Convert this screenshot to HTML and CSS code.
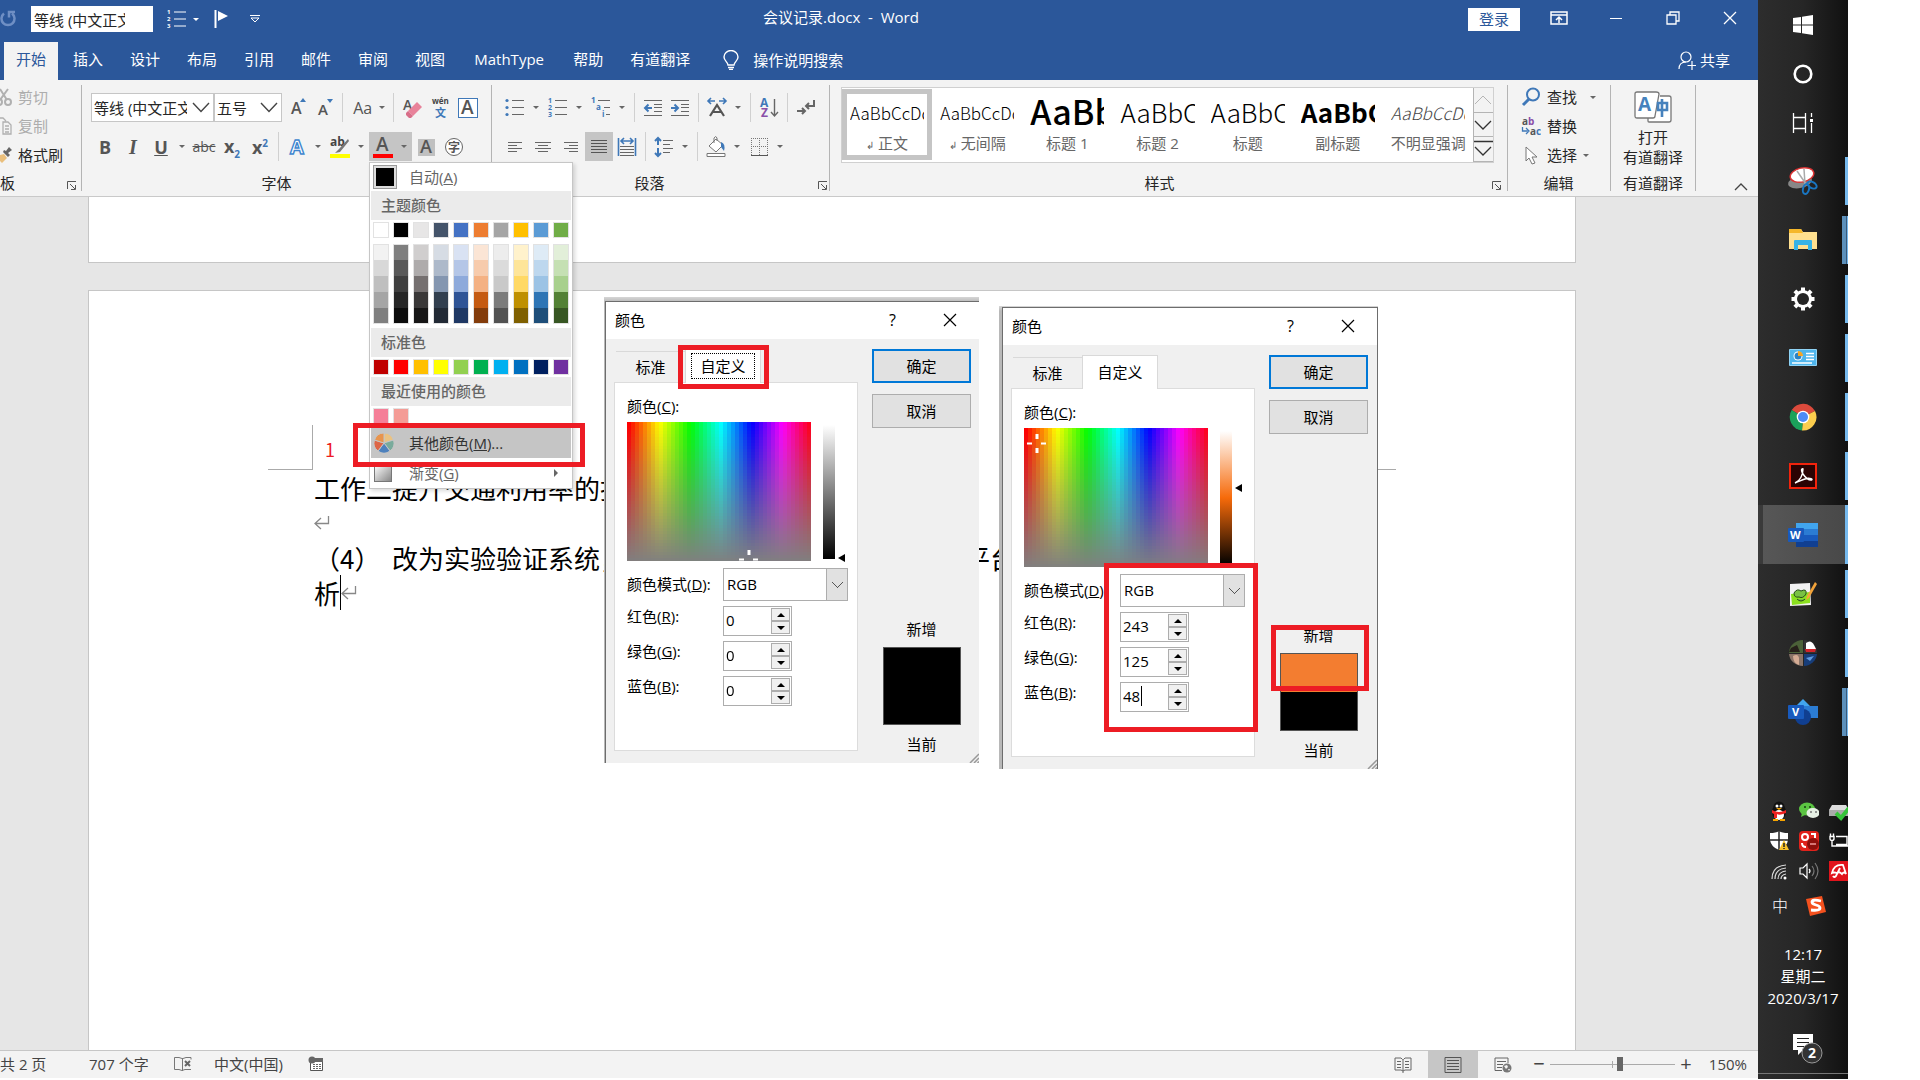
FILE: index.html
```
<!DOCTYPE html>
<html lang="zh-CN">
<head>
    <meta charset="UTF-8">
    <meta name="viewport" content="width=device-width, initial-scale=1.0">
    <title>会议记录.docx - Word</title>
    <link rel="stylesheet" href="styles.css">
</head>
<body>

<main class="word">

    <!-- Title bar -->
    <header class="titlebar">
        <button class="undo" aria-label="重复"><svg width="17" height="18" viewBox="0 0 17 18"><path d="M4 3.500A6.500 6.500 0 1 0 12 3.500M9 7.500V2h6" fill="none" stroke="#6f8fc4" stroke-width="2.500"/></svg></button>
        <input class="quick-font" type="text" aria-label="字体" value="等线 (中文正文)">
        <button class="quick-list" aria-label="编号">
            <svg width="20" height="20" viewBox="0 0 20 20"><path d="M7 3h12M7 10h12M7 17h12" stroke="#fff"/><g fill="#fff" font-family="Open Sans" font-weight="bold" font-size="6"><text x="0" y="5">1</text><text x="0" y="12">2</text><text x="0" y="19">3</text></g></svg>
            <i class="caret light"></i>
        </button>
        <button class="quick-flag" aria-label="标记"><svg width="16" height="20" viewBox="0 0 16 20"><path d="M1.500 1v18" stroke="#fff" stroke-width="2"/><path d="M4 2l10 5-10 5z" fill="#fff"/></svg></button>
        <button class="quick-more" aria-label="自定义"><svg width="10" height="8" viewBox="0 0 10 8"><path d="M0 .5h10M1 3l4 4 4-4z" fill="none" stroke="#fff"/></svg></button>
        <h1 class="doc-title">会议记录.docx&nbsp; -&nbsp; Word</h1>
        <button class="login">登录</button>
        <div class="window-buttons">
            <button aria-label="功能区显示选项"><svg width="18" height="14" viewBox="0 0 18 14"><path d="M1 1h16v12H1zM1 4h16M9 12V6M6 9l3-3 3 3" fill="none" stroke="#fff" stroke-width="1.500"/></svg></button>
            <button aria-label="最小化"><svg width="14" height="14" viewBox="0 0 14 14"><path d="M1 7.500h12" stroke="#fff"/></svg></button>
            <button aria-label="还原"><svg width="14" height="14" viewBox="0 0 14 14"><path d="M1 4h9v9H1zM4 4V1h9v9h-3" fill="none" stroke="#fff" stroke-width="1.300"/></svg></button>
            <button aria-label="关闭"><svg width="14" height="14" viewBox="0 0 14 14"><path d="M1 1l12 12M13 1L1 13" stroke="#fff" stroke-width="1.300"/></svg></button>
        </div>
    </header>

    <!-- Ribbon tabs -->
    <nav class="tabs">
        <button class="tab active">开始</button>
        <button class="tab">插入</button>
        <button class="tab">设计</button>
        <button class="tab">布局</button>
        <button class="tab">引用</button>
        <button class="tab">邮件</button>
        <button class="tab">审阅</button>
        <button class="tab">视图</button>
        <button class="tab addin">MathType</button>
        <button class="tab">帮助</button>
        <button class="tab">有道翻译</button>
        <button class="tell-me"><svg width="16" height="20" viewBox="0 0 16 20"><path d="M5 15c0-3-4-4-4-8a7 6.500 0 0 1 14 0c0 4-4 5-4 8zM5 17.500h6M6 19.500h4" fill="none" stroke="#fff" stroke-width="1.400"/></svg>操作说明搜索</button>
        <button class="share"><svg width="18" height="19" viewBox="0 0 18 19"><g fill="none" stroke="#fff" stroke-width="1.200"><circle cx="8" cy="6" r="5"/><path d="M1 18c0-4 2-7 7-7M14 10v9M9.500 14.500H18"/></g></svg>共享</button>
    </nav>

    <!-- Ribbon -->
    <section class="ribbon">

        <div class="group clipboard">
            <div class="side-list">
                <button class="disabled"><svg width="12" height="20" viewBox="8 0 12 20"><g fill="none" stroke="#b0b0b0" stroke-width="2"><path d="M8 2l7 11M16 2L8 13"/><circle cx="16" cy="15" r="3"/><circle cx="7" cy="15" r="3"/></g></svg>剪切</button>
                <button class="disabled"><svg width="12" height="20" viewBox="8 0 12 20"><path d="M8 2h3l3 3M11 6h5l3 3v9h-8zM13 10h4M13 13h4M13 16h4" fill="none" stroke="#b0b0b0" stroke-width="1.300"/></svg>复制</button>
                <button><svg width="12" height="20" viewBox="8 0 12 20"><path d="M8 10l4-1 3 4-5 5-2-2z" fill="#eabf7c"/><path d="M11 7l5 5 2-2-2-2 4-3-3-3-3 4-2-1z" fill="#666"/></svg>格式刷</button>
            </div>
            <div class="group-name"><span>板</span><button class="launcher" aria-label="剪贴板选项"><svg width="10" height="9" viewBox="0 0 10 9"><path d="M.5 8V.5H9M3 3l5 5M8.500 4v4.500H4" fill="none" stroke="#555"/></svg></button></div>
        </div>

        <div class="group font">
            <div class="tool-row">
                <div class="combo combo-font">
                    <input type="text" aria-label="字体" value="等线 (中文正文)">
                    <button aria-label="选择字体"><svg width="18" height="11" viewBox="0 0 18 11"><path d="M1 1l8 8.500L17 1" fill="none" stroke="#444" stroke-width="1.400"/></svg></button>
                </div>
                <div class="combo combo-size">
                    <input type="text" aria-label="字号" value="五号">
                    <button aria-label="选择字号"><svg width="18" height="11" viewBox="0 0 18 11"><path d="M1 1l8 8.500L17 1" fill="none" stroke="#444" stroke-width="1.400"/></svg></button>
                </div>
                <button class="tool" aria-label="增大字号"><svg width="24" height="24" viewBox="0 0 24 24"><text x="7" y="18" class="glyph" font-size="16">A</text><path d="M16 6l3-4 3 4z" fill="#3f78b8"/></svg></button>
                <button class="tool" aria-label="减小字号"><svg width="24" height="24" viewBox="0 0 24 24"><text x="6" y="19" class="glyph" font-size="15">A</text><path d="M15 3h6l-3 4z" fill="#3f78b8"/></svg></button>
                <i class="sep"></i>
                <button class="tool drop" aria-label="更改大小写"><span class="case">Aa</span><i class="caret"></i></button>
                <i class="sep"></i>
                <button class="tool" aria-label="清除格式"><svg width="24" height="24" viewBox="0 0 24 24"><text x="3" y="14" class="glyph" font-size="14">A</text><path d="M8 15l9-9 5 5-9 9z" fill="#e8829a"/><path d="M6 17l2-2 5 5-2 2H9l-3-3z" fill="#d86d88"/></svg></button>
                <button class="tool" aria-label="拼音指南"><svg width="24" height="24" viewBox="0 0 24 24"><text x="4" y="8" font-family="Open Sans" font-size="8" fill="#444">wén</text><text x="7" y="21" font-family="Noto Sans CJK SC" font-size="11" font-weight="bold" fill="#3f78b8">文</text></svg></button>
                <button class="tool" aria-label="字符边框"><svg width="24" height="24" viewBox="0 0 24 24"><rect x="2.500" y="2.500" width="19" height="19" fill="#fff" stroke="#3f78b8"/><text x="5" y="18" class="glyph" font-size="19">A</text></svg></button>
            </div>
            <div class="tool-row">
                <button class="tool bold" aria-label="加粗">B</button>
                <button class="tool italic" aria-label="倾斜">I</button>
                <button class="tool drop" aria-label="下划线"><span class="under">U</span><i class="caret"></i></button>
                <button class="tool strike" aria-label="删除线">abc</button>
                <button class="tool script" aria-label="下标"><span>x<sub>2</sub></span></button>
                <button class="tool script" aria-label="上标"><span>x<sup>2</sup></span></button>
                <i class="sep"></i>
                <button class="tool drop" aria-label="文本效果"><svg width="24" height="24" viewBox="0 0 24 24"><text x="5" y="19" font-family="Open Sans" font-size="20" font-weight="bold" fill="#fff" stroke="#3f86cf" stroke-width="1.400">A</text></svg><i class="caret"></i></button>
                <button class="tool drop" aria-label="突出显示"><svg width="24" height="24" viewBox="0 0 24 24"><text x="2" y="11" font-family="Open Sans" font-size="12" fill="#444">ab</text><path d="M20 4l1 2-9 11-5 1 4-4z" fill="#777"/><path d="M2 19h20v4H2z" fill="#ff0"/></svg><i class="caret"></i></button>
                <div class="color-picker">
                    <button class="tool drop pressed" aria-label="字体颜色"><svg width="24" height="24" viewBox="0 0 24 24"><text x="5" y="16" class="glyph" font-size="19">A</text><path d="M2 19h20v4H2z" fill="#f00"/></svg><i class="caret"></i></button>

                    <!-- Font colour menu -->
                    <div class="color-menu">
                        <button class="menu-item"><i class="auto-swatch"></i>自动(<u>A</u>)</button>
                        <h2>主题颜色</h2>
                        <div class="swatches" id="theme-colors"></div>
                        <div class="shades" id="theme-shades"></div>
                        <h2>标准色</h2>
                        <div class="swatches" id="standard-colors"></div>
                        <h2>最近使用的颜色</h2>
                        <div class="swatches recent" id="recent-colors"></div>
                        <button class="menu-item hover"><svg width="20" height="20" viewBox="-10 -10 20 20"><g stroke="#c5c5c5"><path d="M0 0V-10A10 10 0 0 1 9.500-3z" fill="#eac282"/><path d="M0 0L9.500-3A10 10 0 0 1 6 8z" fill="#79ab9c"/><path d="M0 0L6 8A10 10 0 0 1-6 8z" fill="#4e81bd"/><path d="M0 0L-6 8A10 10 0 0 1-9.500-3z" fill="#dd6647"/><path d="M0 0L-9.500-3A10 10 0 0 1 0-10z" fill="#e8954e"/></g></svg>其他颜色(<u>M</u>)...</button>
                        <button class="menu-item"><i class="gradient-swatch"></i>渐变(<u>G</u>)<i class="arrow"></i></button>
                    </div>
                    <div class="mark mark-menu"></div>
                </div>
                <button class="tool" aria-label="字符底纹"><svg width="24" height="24" viewBox="0 0 24 24"><path d="M4 4h17v17H4z" fill="#c0c0c0"/><text x="6" y="18" class="glyph" font-size="18">A</text></svg></button>
                <button class="tool" aria-label="带圈字符"><svg width="24" height="24" viewBox="0 0 24 24"><circle cx="12" cy="12" r="8.500" fill="#fff" stroke="#666"/><text x="6" y="17" font-family="Noto Sans CJK SC" font-size="12" fill="#555">字</text></svg></button>
            </div>
            <div class="group-name"><span>字体</span></div>
        </div>

        <div class="group paragraph">
            <div class="tool-row">
                <button class="tool drop" aria-label="项目符号"><svg width="24" height="24" viewBox="0 0 24 24"><path d="M9 4.500h12M9 11.500h12M9 18.500h12" stroke="#666"/><g fill="#3f78b8"><circle cx="4" cy="4.500" r="1.600"/><circle cx="4" cy="11.500" r="1.600"/><circle cx="4" cy="18.500" r="1.600"/></g></svg><i class="caret"></i></button>
                <button class="tool drop" aria-label="编号"><svg width="24" height="24" viewBox="0 0 24 24"><path d="M9 4.500h12M9 11.500h12M9 18.500h12" stroke="#666"/><g fill="#3f78b8" font-family="Open Sans" font-weight="bold" font-size="7"><text x="2" y="7">1</text><text x="2" y="14">2</text><text x="2" y="21">3</text></g></svg><i class="caret"></i></button>
                <button class="tool drop" aria-label="多级列表"><svg width="24" height="24" viewBox="0 0 24 24"><path d="M9 4.500h12M15 11.500h6M17 18.500h4" stroke="#666"/><g fill="#3f78b8" font-family="Open Sans" font-weight="bold" font-size="8"><text x="2" y="7">1</text><text x="7" y="14">a</text><text x="13" y="21">i</text></g></svg><i class="caret"></i></button>
                <i class="sep"></i>
                <button class="tool" aria-label="减少缩进"><svg width="24" height="24" viewBox="0 0 24 24"><path d="M3 4.500h18M3 19.500h18M13 8.500h8M13 11.500h8M13 15.500h8" stroke="#666"/><path d="M11 12H4M7.500 8.500L4 12l3.500 3.500" fill="none" stroke="#3f78b8" stroke-width="2"/></svg></button>
                <button class="tool" aria-label="增加缩进"><svg width="24" height="24" viewBox="0 0 24 24"><path d="M3 4.500h18M3 19.500h18M13 8.500h8M13 11.500h8M13 15.500h8" stroke="#666"/><path d="M3 12h7M6.500 8.500L10 12l-3.500 3.500" fill="none" stroke="#3f78b8" stroke-width="2"/></svg></button>
                <i class="sep"></i>
                <button class="tool drop" aria-label="中文版式"><svg width="24" height="24" viewBox="0 0 24 24"><path d="M5 20l7-11 7 11M8 16h8" fill="none" stroke="#555" stroke-width="2.200"/><path d="M3 5h7M6 2L3 5l3 3M14 5h7M18 2l3 3-3 3" fill="none" stroke="#3f78b8" stroke-width="1.600"/></svg><i class="caret"></i></button>
                <i class="sep"></i>
                <button class="tool" aria-label="排序"><svg width="24" height="24" viewBox="0 0 24 24"><g font-family="Open Sans" font-weight="bold" font-size="12"><text x="3" y="11" fill="#3f78b8">A</text><text x="4" y="21" fill="#8a4fa8">Z</text></g><path d="M17.500 3v17M14 16l3.500 4 3.500-4" fill="none" stroke="#666" stroke-width="1.400"/></svg></button>
                <i class="sep"></i>
                <button class="tool" aria-label="显示编辑标记"><svg width="24" height="24" viewBox="0 0 24 24"><path d="M20 4v6h-8M15 7l-3 3 3 3M3 15h8M8 12l3 3-3 3" fill="none" stroke="#666" stroke-width="2"/></svg></button>
            </div>
            <div class="tool-row">
                <button class="tool" aria-label="左对齐"><svg width="24" height="24" viewBox="0 0 24 24"><path d="M5 7.500h14M5 10.500h9M5 13.500h14M5 16.500h9" stroke="#666"/></svg></button>
                <button class="tool" aria-label="居中"><svg width="24" height="24" viewBox="0 0 24 24"><path d="M4 7.500h16M7 10.500h10M4 13.500h16M7 16.500h10" stroke="#666"/></svg></button>
                <button class="tool" aria-label="右对齐"><svg width="24" height="24" viewBox="0 0 24 24"><path d="M5 7.500h14M10 10.500h9M5 13.500h14M10 16.500h9" stroke="#666"/></svg></button>
                <button class="tool pressed" aria-label="两端对齐"><svg width="24" height="24" viewBox="0 0 24 24"><path d="M4 5.500h16M4 8.500h16M4 11.500h16M4 14.500h16M4 17.500h16" stroke="#555"/></svg></button>
                <button class="tool" aria-label="分散对齐"><svg width="24" height="24" viewBox="0 0 24 24"><path d="M3.500 3v18M20.500 3v18M6 6h12M9 3L6 6l3 3M15 3l3 3-3 3" fill="none" stroke="#3f78b8" stroke-width="1.600"/><path d="M5 11.500h14M5 14.500h14M5 17.500h14M5 20.500h14" stroke="#666"/></svg></button>
                <i class="sep"></i>
                <button class="tool drop" aria-label="行距"><svg width="24" height="24" viewBox="0 0 24 24"><path d="M11 5.500h10M11 9.500h7M11 13.500h10M11 17.500h7" stroke="#666"/><path d="M6 3v7M3 6l3-3 3 3M6 13v8M3 18l3 3 3-3" fill="none" stroke="#3f78b8" stroke-width="2"/></svg><i class="caret"></i></button>
                <i class="sep"></i>
                <button class="tool drop" aria-label="底纹"><svg width="24" height="24" viewBox="0 0 24 24"><path d="M5 11l7-7 7 6-7 7zM10 8V3q2-3 3 0v3M3 18.500h18v3H3z" fill="#fff" stroke="#777"/><path d="M17 7q5 2 3 9l-3-4z" fill="#3f78b8"/></svg><i class="caret"></i></button>
                <button class="tool drop" aria-label="边框"><svg width="24" height="24" viewBox="0 0 24 24"><path d="M4 3.500h17M4.500 3v17M20.500 3v17M12.500 3v17M4 11.500h17" stroke="#777" stroke-dasharray="1 1"/><path d="M4 20.500h17" stroke="#555"/></svg><i class="caret"></i></button>
            </div>
            <div class="group-name"><span>段落</span><button class="launcher" aria-label="段落选项"><svg width="10" height="9" viewBox="0 0 10 9"><path d="M.5 8V.5H9M3 3l5 5M8.500 4v4.500H4" fill="none" stroke="#555"/></svg></button></div>
        </div>

        <div class="group styles">
            <div class="gallery">
                <button class="style selected"><span class="preview">AaBbCcDd</span><span class="style-name"><small>↲</small> 正文</span></button>
                <button class="style"><span class="preview">AaBbCcDd</span><span class="style-name"><small>↲</small> 无间隔</span></button>
                <button class="style"><span class="preview huge">AaBbC</span><span class="style-name">标题 1</span></button>
                <button class="style"><span class="preview large">AaBbCc</span><span class="style-name">标题 2</span></button>
                <button class="style"><span class="preview large">AaBbCc</span><span class="style-name">标题</span></button>
                <button class="style"><span class="preview large strong">AaBbCc</span><span class="style-name">副标题</span></button>
                <button class="style"><span class="preview slanted">AaBbCcDd</span><span class="style-name">不明显强调</span></button>
                <div class="gallery-scroll">
                    <button aria-label="上一行"><svg width="18" height="10" viewBox="0 0 18 10"><path d="M1 9l8-8 8 8" fill="none" stroke="#b5b5b5"/></svg></button>
                    <button aria-label="下一行"><svg width="18" height="10" viewBox="0 0 18 10"><path d="M1 1l8 8 8-8" fill="none" stroke="#333" stroke-width="1.300"/></svg></button>
                    <button aria-label="更多样式"><svg width="20" height="18" viewBox="0 0 20 18"><path d="M0 1.500h20M2 7l8 8 8-8" fill="none" stroke="#333" stroke-width="1.300"/></svg></button>
                </div>
            </div>
            <div class="group-name"><span>样式</span><button class="launcher" aria-label="样式选项"><svg width="10" height="9" viewBox="0 0 10 9"><path d="M.5 8V.5H9M3 3l5 5M8.500 4v4.500H4" fill="none" stroke="#555"/></svg></button></div>
        </div>

        <div class="group editing">
            <div class="side-list">
                <button><svg width="20" height="20" viewBox="0 0 20 20"><circle cx="12" cy="7.500" r="6" fill="none" stroke="#3f78b8" stroke-width="2"/><path d="M8 12l-6 6" stroke="#3f78b8" stroke-width="3"/></svg>查找<i class="caret far"></i></button>
                <button><svg width="20" height="20" viewBox="0 0 20 20"><g font-family="Open Sans" font-size="10" font-weight="bold"><text x="1" y="9" fill="#555">a</text><text x="7" y="9" fill="#8a4fa8">b</text><text x="9" y="19" fill="#555">a</text><text x="15" y="19" fill="#3f78b8">c</text></g><path d="M1.500 11v4h5M5 12l3 3-3 3" fill="none" stroke="#3f78b8" stroke-width="1.300"/></svg>替换</button>
                <button><svg width="20" height="20" viewBox="0 0 20 20"><path d="M5 2v14l3-3 3 6 3-1-3-6h5z" fill="#fff" stroke="#777"/></svg>选择<i class="caret"></i></button>
            </div>
            <div class="group-name"><span>编辑</span></div>
        </div>

        <div class="group youdao">
            <button class="big-button">
                <svg width="38" height="32" viewBox="0 0 38 32"><path d="M14 27v3q0 1 1 1h20q2 0 2-2V7q0-2-2-2h-9" fill="#fff" stroke="#777" stroke-width="1.300"/><path d="M3 1h19q3 0 3 2l-4 22q0 2-2 2H3q-2 0-2-2V3q0-2 2-2z" fill="#fff" stroke="#777" stroke-width="1.300"/><text x="4" y="20" font-family="Open Sans" font-size="19" font-weight="bold" fill="#4682bd">A</text><path d="M24 12h9v7h-9zM28 8v18" fill="none" stroke="#4682bd" stroke-width="2.600"/></svg>
                <span>打开</span>
                <span>有道翻译</span>
            </button>
            <div class="group-name"><span>有道翻译</span></div>
        </div>

        <button class="collapse" aria-label="折叠功能区"><svg width="14" height="9" viewBox="0 0 14 9"><path d="M1 8l6-6 6 6" fill="none" stroke="#444" stroke-width="1.300"/></svg></button>
    </section>

    <!-- Document -->
    <section class="document">
        <div class="page previous"></div>
        <article class="page current">
            <div class="page-header">
                <i class="corner left"></i>
                <span class="page-number">1</span>
                <i class="corner right"></i>
            </div>
            <div class="page-text">
                <p>工作二提升交通利用率的措施</p>
                <p><svg class="pilcrow" width="16" height="14" viewBox="0 0 16 14"><path d="M14.500 0v7.500H1M7 2L1 7.500 7 13" fill="none" stroke="#888" stroke-width="1.300"/></svg></p>
                <p>（4）&nbsp;&nbsp;改为实验验证系统，用于支撑数据的采集与处理等平台</p>
                <p>析<i class="cursor"></i><svg class="pilcrow" width="16" height="14" viewBox="0 0 16 14"><path d="M14.500 0v7.500H1M7 2L1 7.500 7 13" fill="none" stroke="#888" stroke-width="1.300"/></svg></p>
            </div>
        </article>

        <!-- Colour dialog, before -->
        <div class="shot shot-before">
            <form class="dialog">
                <div class="dialog-title"><span>颜色</span><button type="button">?</button><button type="button" aria-label="关闭"><svg width="14" height="14" viewBox="0 0 14 14"><path d="M1 1l12 12M13 1L1 13" stroke="#000" stroke-width="1.200"/></svg></button></div>
                <div class="dialog-body">
                    <div class="dialog-main">
                        <div class="dialog-tabs"><button type="button">标准</button><button type="button" class="active"><span class="focus">自定义</span></button></div>
                        <div class="panel">
                            <div class="panel-label">颜色(<u>C</u>):</div>
                            <div class="pickers">
                                <div class="spectrum-box">
                                    <canvas class="spectrum" width="46" height="46"></canvas>
                                    <svg class="cross cross-low" width="20" height="20" viewBox="0 0 20 20"><path d="M8.500 0h3v5h-3zM0 8.500h5v2H0zM14 8.500h5v2h-5z" fill="#fff"/></svg>
                                </div>
                                <div class="luminance grey"></div>
                                <i class="pointer low"></i>
                            </div>
                            <div class="field">
                                <label for="mode-a">颜色模式(<u>D</u>):</label>
                                <select id="mode-a"><option>RGB</option></select>
                            </div>
                            <div class="field number"><label for="red-a">红色(<u>R</u>):</label><div class="spinner"><input id="red-a" type="text" value="0"><span><button type="button" class="up" aria-label="增加"></button><button type="button" class="down" aria-label="减少"></button></span></div></div>
                            <div class="field number"><label for="green-a">绿色(<u>G</u>):</label><div class="spinner"><input id="green-a" type="text" value="0"><span><button type="button" class="up" aria-label="增加"></button><button type="button" class="down" aria-label="减少"></button></span></div></div>
                            <div class="field number"><label for="blue-a">蓝色(<u>B</u>):</label><div class="spinner"><input id="blue-a" type="text" value="0"><span><button type="button" class="up" aria-label="增加"></button><button type="button" class="down" aria-label="减少"></button></span></div></div>
                        </div>
                    </div>
                    <div class="dialog-side">
                        <button type="button" class="ok">确定</button>
                        <button type="button">取消</button>
                        <span class="new-label">新增</span>
                        <div class="compare"><i class="new-color"></i></div>
                        <span class="current-label">当前</span>
                    </div>
                </div>
                <svg class="grip" width="10" height="10" viewBox="0 0 10 10"><path d="M1 10l9-9M5 10l5-5M8.500 10L10 8.500" stroke="#999" stroke-width="1.500"/></svg>
            </form>
        </div>

        <!-- Colour dialog, after -->
        <div class="shot shot-after">
            <form class="dialog">
                <div class="dialog-title"><span>颜色</span><button type="button">?</button><button type="button" aria-label="关闭"><svg width="14" height="14" viewBox="0 0 14 14"><path d="M1 1l12 12M13 1L1 13" stroke="#000" stroke-width="1.200"/></svg></button></div>
                <div class="dialog-body">
                    <div class="dialog-main">
                        <div class="dialog-tabs"><button type="button">标准</button><button type="button" class="active">自定义</button></div>
                        <div class="panel">
                            <div class="panel-label">颜色(<u>C</u>):</div>
                            <div class="pickers">
                                <div class="spectrum-box">
                                    <canvas class="spectrum" width="46" height="46"></canvas>
                                    <svg class="cross cross-high" width="20" height="20" viewBox="0 0 20 20"><path d="M8.500 0h3v5h-3zM0 8.500h5v2H0zM14 8.500h5v2h-5zM8.500 14h3v5h-3z" fill="#fff"/></svg>
                                </div>
                                <div class="luminance orange"></div>
                                <i class="pointer middle"></i>
                            </div>
                            <div class="field">
                                <label for="mode-b">颜色模式(<u>D</u>):</label>
                                <select id="mode-b"><option>RGB</option></select>
                            </div>
                            <div class="field number"><label for="red-b">红色(<u>R</u>):</label><div class="spinner"><input id="red-b" type="text" value="243"><span><button type="button" class="up" aria-label="增加"></button><button type="button" class="down" aria-label="减少"></button></span></div></div>
                            <div class="field number"><label for="green-b">绿色(<u>G</u>):</label><div class="spinner"><input id="green-b" type="text" value="125"><span><button type="button" class="up" aria-label="增加"></button><button type="button" class="down" aria-label="减少"></button></span></div></div>
                            <div class="field number"><label for="blue-b">蓝色(<u>B</u>):</label><div class="spinner"><input id="blue-b" type="text" value="48"><i class="input-cursor"></i><span><button type="button" class="up" aria-label="增加"></button><button type="button" class="down" aria-label="减少"></button></span></div></div>
                        </div>
                    </div>
                    <div class="dialog-side">
                        <button type="button" class="ok">确定</button>
                        <button type="button">取消</button>
                        <span class="new-label">新增</span>
                        <div class="compare"><i class="new-color picked"></i></div>
                        <span class="current-label">当前</span>
                    </div>
                </div>
                <svg class="grip" width="10" height="10" viewBox="0 0 10 10"><path d="M1 10l9-9M5 10l5-5M8.500 10L10 8.500" stroke="#999" stroke-width="1.500"/></svg>
            </form>
        </div>

        <div class="mark mark-tab"></div>
        <div class="mark mark-rgb"></div>
        <div class="mark mark-new"></div>
    </section>

    <!-- Status bar -->
    <footer class="statusbar">
        <span class="pages">共 2 页</span>
        <span class="words">707 个字</span>
        <svg class="proof" width="18" height="16" viewBox="0 0 18 16"><path d="M8.500 2v13M8 2.500l-3-1H.5v12H5l3 1 3-1h6M9 2.500l3-1h5v2" fill="none" stroke="#777"/><path d="M11 5l5 5M16 5l-5 5" stroke="#666" stroke-width="2"/></svg>
        <span class="language">中文(中国)</span>
        <svg class="macro" width="16" height="16" viewBox="0 0 16 16"><path d="M2.500 3.500h12v11h-12z" fill="#fff" stroke="#555"/><path d="M5 2h10v4H5z" fill="#666"/><circle cx="4" cy="4" r="3.500" fill="#666"/><path d="M5 8.500h8M5 10.500h8M5 12.500h8" stroke="#666" stroke-dasharray="2 1"/></svg>
        <div class="views">
            <button aria-label="阅读视图"><svg width="18" height="16" viewBox="0 0 18 16"><path d="M9 2v14M8.500 2.500L7 1H1v12h6l2 1 2-1h6V1h-6L9.500 2.500M3 4.500h4M3 7.500h4M3 10.500h4M11 4.500h4M11 7.500h4M11 10.500h4" fill="none" stroke="#666"/></svg></button>
            <button class="active" aria-label="页面视图"><svg width="18" height="16" viewBox="0 0 18 16"><path d="M1 .5h16v15H1zM3 3.500h12M3 6.500h12M3 9.500h12M3 12.500h12" fill="none" stroke="#555"/></svg></button>
            <button aria-label="Web 版式"><svg width="18" height="16" viewBox="0 0 18 16"><path d="M8 13.500H1V1h13v5M3 4.500h9M3 7.500h6M3 10.500h5" fill="none" stroke="#666"/><circle cx="13" cy="11" r="4.500" fill="#777"/><path d="M10 9l3-1 1 2-2 2zM14 12h2l-1 2z" fill="#f3f3f3"/></svg></button>
        </div>
        <button class="zoom-step" aria-label="缩小">−</button>
        <input class="zoom" type="range" min="10" max="290" value="167" aria-label="缩放">
        <button class="zoom-step" aria-label="放大">+</button>
        <span class="percent">150%</span>
    </footer>
</main>

<!-- Windows taskbar -->
<aside class="taskbar">
    <div class="system">
        <button aria-label="开始"><svg width="20" height="20" viewBox="0 0 20 20"><path d="M0 3l8-1v7.500H0zM9 1.800L20 0v9.500H9zM0 10.500h8V18l-8-1zM9 10.500h11V20L9 18.200z" fill="#fff"/></svg></button>
        <button aria-label="Cortana"><svg width="20" height="20" viewBox="0 0 20 20"><circle cx="10" cy="10" r="8.300" fill="none" stroke="#fff" stroke-width="2.600"/></svg></button>
        <button aria-label="任务视图"><svg width="22" height="20" viewBox="0 0 22 20"><path d="M1.500 0v4.500h12V0M1.500 20v-4.500h12V20M1.500 4.500v11M13.500 4.500v11M19.500 0v4M19.500 10v10" fill="none" stroke="#fff" stroke-width="1.300"/><path d="M18 6h3v3h-3z" fill="#fff"/></svg></button>
    </div>
    <div class="apps">
        <button class="running" aria-label="截图工具"><svg width="30" height="30" viewBox="0 0 30 30"><ellipse cx="12" cy="16" rx="12" ry="6" fill="#888" transform="rotate(-12 12 16)"/><ellipse cx="14" cy="9" rx="12" ry="7" fill="#fff" stroke="#d33" stroke-width="1.400" transform="rotate(-12 14 9)"/><path d="M9 5l9 13M16 3l1 15" stroke="#aaa" stroke-width="1.500"/><g fill="none" stroke="#1976c2" stroke-width="2"><ellipse cx="18" cy="23" rx="3" ry="5" transform="rotate(15 18 23)"/><ellipse cx="24" cy="19" rx="5" ry="3" transform="rotate(30 24 19)"/></g></svg></button>
        <button class="running several" aria-label="文件资源管理器"><svg width="28" height="24" viewBox="0 0 28 24"><path d="M0 1h12l2 3h14v17H0z" fill="#ffe08f"/><path d="M0 1h12l2 4H0z" fill="#f5b72a"/><path d="M5 22V13q0-1 1-1h16q1 0 1 1v9h-4v-5H9v5z" fill="#37b3e6"/></svg></button>
        <button class="running" aria-label="设置"><svg width="24" height="24" viewBox="-12 -12 24 24"><g fill="#fff"><circle r="9"/><path id="tooth" d="M-2-11.500h4v23h-4z"/><use href="#tooth" transform="rotate(45)"/><use href="#tooth" transform="rotate(90)"/><use href="#tooth" transform="rotate(135)"/></g><circle r="6" fill="#252525"/></svg></button>
        <button class="running" aria-label="控制面板"><svg width="28" height="18" viewBox="0 0 28 18"><path d="M.5.5h27v16H.5z" fill="#4fb5ec" stroke="#8fd3f5"/><circle cx="9" cy="7" r="4.500" fill="#fff"/><circle cx="9" cy="7" r="3.500" fill="#2b83c6"/><path d="M9 7V2a5 5 0 0 1 5 5z" fill="#f6a623"/><path d="M17 4.500h8M17 7.500h8M17 10.500h8M3 14h20" stroke="#fff" stroke-width="1.500"/></svg></button>
        <button class="running" aria-label="Chrome"><svg width="28" height="28" viewBox="-14 -14 28 28"><path d="M0 0L-11.300-7A13.500 13.500 0 0 1 12-6z" fill="#db4a3c"/><path d="M0 0L12-6A13.500 13.500 0 0 1-1 13.500z" fill="#fccd4d"/><path d="M0 0L-1 13.500A13.500 13.500 0 0 1-11.300-7z" fill="#1ba25b"/><circle r="6.300" fill="#fff"/><circle r="5" fill="#4c8bf5"/></svg></button>
        <button class="running" aria-label="Acrobat"><svg width="28" height="26" viewBox="0 0 28 26"><path d="M1 1h26v24H1z" fill="#2b0303" stroke="#f2230c" stroke-width="2"/><path d="M6 20c5-2 8-8 8-14-2-1-2 2 0 5s5 6 8 6-1-3-6-1-8 3-10 4z" fill="none" stroke="#fff" stroke-width="1.400"/></svg></button>
        <button class="running current" aria-label="Word"><svg width="30" height="26" viewBox="0 0 30 26"><path d="M8 1h22v6H8z" fill="#41a5ee"/><path d="M8 7h22v6H8z" fill="#2b7cd3"/><path d="M8 13h22v6H8z" fill="#185abd"/><path d="M8 19h22v6H8z" fill="#103f91"/><rect y="6" width="16" height="14" rx="1" fill="#185abd"/><text x="2" y="17" font-family="Open Sans" font-size="11" font-weight="bold" fill="#fff">W</text></svg></button>
        <button class="running" aria-label="Notepad++"><svg width="28" height="26" viewBox="0 0 28 26"><path d="M1 3l20-1 1 22-21 1z" fill="#f2f2f2"/><path d="M2 13l19-2v11L3 24z" fill="#8be01f"/><path d="M5 12q3-5 7-2 6-3 5 3-3 5-7 3-5 1-5-4zM8 18q4 4 8 0" fill="#79c143" stroke="#264d17"/><path d="M26 1l2 2-8 14-3 2 1-4z" fill="#f2a33a"/></svg></button>
        <button class="running" aria-label="群聊"><svg width="30" height="28" viewBox="0 0 30 28"><path d="M15 1v13H1A14 13 0 0 1 15 1z" fill="#4b6138"/><path d="M16 1a14 13 0 0 1 13 13H16z" fill="#333"/><path d="M15 27V15H1a14 13 0 0 0 14 12z" fill="#8a7468"/><path d="M16 27a14 13 0 0 0 13-12H16z" fill="#173d79"/><path d="M3 9l6-3 3 7H1z" fill="#26201a"/><path d="M18 4q5-4 8 2l2 4q-6 2-10 0z" fill="#fff"/><path d="M17 10h11l-1 3h-9z" fill="#d1242a"/><path d="M5 17q5-3 6 2v7q-6-2-6-9z" fill="#d4ab94"/><path d="M18 19l8-2-4 5z" fill="#5f9be0"/></svg></button>
        <button class="running several" aria-label="Visio"><svg width="30" height="26" viewBox="0 0 30 26"><path d="M15 0l8 8-8 8-8-8z" fill="#41a5ee"/><path d="M16 7h14v12H16z" fill="#2b7cd3"/><circle cx="15" cy="18" r="8" fill="#103f91"/><rect y="6" width="16" height="14" rx="1" fill="#185abd"/><text x="4" y="17" font-family="Open Sans" font-size="11" font-weight="bold" fill="#fff">V</text></svg></button>
    </div>
    <div class="tray">
        <svg width="20" height="20" viewBox="0 0 20 20"><ellipse cx="10" cy="11" rx="7" ry="8" fill="#111"/><circle cx="10" cy="6" r="5.500" fill="#111"/><ellipse cx="10" cy="14" rx="5" ry="5" fill="#fff"/><circle cx="8" cy="5" r="1.500" fill="#fff"/><circle cx="12" cy="5" r="1.500" fill="#fff"/><path d="M7 7h6l-3 2zM4 18h5v2H4zM11 18h5v2h-5z" fill="#f7a400"/><path d="M3 9q7 4 14 0v3q-7 3-9 1v4H5v-4l-2-1z" fill="#e22"/></svg>
        <svg width="20" height="20" viewBox="0 0 20 20"><ellipse cx="8" cy="8" rx="8" ry="6.500" fill="#5bc442"/><path d="M3 12l-1 4 4-2z" fill="#5bc442"/><ellipse cx="14" cy="12" rx="6.500" ry="5" fill="#e6f0e4"/><path d="M5 6h2M10 6h2" stroke="#255c1c" stroke-width="2"/><path d="M11 11h2M16 11h2" stroke="#777" stroke-width="1.500"/></svg>
        <svg width="20" height="20" viewBox="0 0 20 20"><path d="M3 4h14l3 5H0z" fill="#ddd"/><path d="M0 9h20v6H0z" fill="#aaa"/><path d="M7 12l5 5 8-10" fill="none" stroke="#36c43a" stroke-width="4"/></svg>
        <svg width="20" height="20" viewBox="0 0 20 20"><path d="M1 2q6 0 9-2 3 2 9 2v7q-1 7-9 10Q2 16 1 9z" fill="#fff"/><path d="M10 0v19M1 9h18" stroke="#222" stroke-width="1.500"/><path d="M15 9l5 10H10z" fill="#f7c12a"/><path d="M15 12v4M15 17v1" stroke="#222" stroke-width="1.500"/></svg>
        <svg width="20" height="20" viewBox="0 0 20 20"><rect width="20" height="20" rx="4" fill="#e0221b"/><g fill="none" stroke="#fff" stroke-width="2"><circle cx="6" cy="6" r="3"/><path d="M12 3h4v4M3 12q0 4 4 4"/></g><circle cx="14" cy="13" r="6" fill="#8d0f0c"/><path d="M11 13h6" stroke="#e99" stroke-width="1.500"/></svg>
        <svg width="20" height="20" viewBox="0 0 20 20"><path d="M1 5.500h4v2q0 2-2 2t-2-2zM1.500 5.500v-3M4.500 5.500v-3M3 9v6h17M7 5.500h11v8H7" fill="none" stroke="#fff" stroke-width="1.400"/></svg>
        <svg width="20" height="20" viewBox="0 0 20 20"><g fill="none" stroke="#ddd" stroke-width="1.200"><path d="M3 18Q3 5 17 4M6 18q0-10 11-11M9 18q0-7 8-8M12 18q0-4 5-5"/></g><circle cx="16" cy="17" r="1.500" fill="#fff"/></svg>
        <svg width="20" height="20" viewBox="0 0 20 20"><path d="M1 7h3l4-4v14l-4-4H1zM10 8q2 2 0 4" fill="none" stroke="#fff" stroke-width="1.200"/><path d="M13 5q4 5 0 10M16 2q6 8 0 16" fill="none" stroke="#777" stroke-width="1.200"/></svg>
        <svg width="20" height="20" viewBox="0 0 20 20"><path d="M0 0h20v20H0z" fill="#e1141c"/><path d="M3 12Q5 3 14 4l3 9q-2-3-4 0-3-3-5-1-3-1-5 0zM11 7l-4 8q-2 2-3 0" fill="none" stroke="#fff" stroke-width="1.800"/></svg>
    </div>
    <div class="ime">
        <span>中</span>
        <svg width="20" height="20" viewBox="0 0 20 20"><path d="M0 3l16-3 4 16-16 4z" fill="#f4511e"/><path d="M15 5q-9-2-9 1 0 2 4 3t4 3q0 3-9 2" fill="none" stroke="#fff" stroke-width="2.800"/></svg>
    </div>
    <div class="clock"><span>12:17</span><span>星期二</span><span>2020/3/17</span></div>
    <button class="notices" aria-label="通知"><svg width="32" height="32" viewBox="0 0 32 32"><path d="M1 1h20v16H11l-5 5v-5H1z" fill="#fff"/><path d="M5 5.500h12M5 9.500h12M5 13.500h12" stroke="#222"/><circle cx="20" cy="20" r="10" fill="#333" stroke="#999"/><text x="16" y="25" font-family="Open Sans" font-size="14" font-weight="bold" fill="#fff">2</text></svg></button>
</aside>

<script src="script.js"></script>
</body>
</html>
```
FILE: styles.css
```
* {
    box-sizing: border-box;
}
body {
    margin: 0;
    padding-right: 72px;
    height: 100vh;
    display: flex;
    overflow: hidden;
    background-color: white;
    font-family: "Open Sans", "Noto Sans CJK SC", sans-serif;
    font-size: 15px;
    line-height: 22px;
    color: #262626;
}
button, input, select {
    font: inherit;
    color: inherit;
    margin: 0;
    padding: 0;
    border: none;
    border-radius: 0;
    background: none;
}
svg {
    display: block;
    flex: none;
}
p, h1, h2 {
    margin: 0;
}
.word {
    flex: 1;
    min-width: 0;
    display: flex;
    flex-direction: column;
    margin-bottom: 2px;
}

/* Title bar */
.titlebar {
    height: 38px;
    display: flex;
    align-items: center;
    background-color: #2b579a;
    color: white;
}
.undo {
    width: 31px;
}
.quick-font {
    width: 122px;
    height: 26px;
    padding: 0 28px 0 3px;
    background-color: white;
    color: #262626;
}
.quick-list {
    display: flex;
    align-items: center;
    gap: 6px;
    margin-left: 14px;
}
.quick-flag {
    margin-left: 15px;
}
.quick-more {
    margin-left: 20px;
}
.doc-title {
    flex: 1;
    padding: 0 46px 4px 0;
    font-size: 15px;
    font-weight: normal;
    text-align: center;
}
.login {
    width: 52px;
    height: 23px;
    margin-right: 10px;
    background-color: white;
    color: #2b579a;
    line-height: 20px;
}
.window-buttons {
    display: flex;
}
.window-buttons button {
    width: 57px;
    height: 38px;
    display: flex;
    align-items: center;
    justify-content: center;
    padding-bottom: 2px;
}
.caret {
    flex: none;
    border: 3px solid transparent;
    border-top-color: #666;
    border-bottom: none;
}
.caret.light {
    border-top-color: white;
}

/* Ribbon tabs */
.tabs {
    height: 42px;
    display: flex;
    align-items: flex-end;
    gap: 3px;
    padding: 0 28px 0 4px;
    background-color: #2b579a;
    color: white;
}
.tabs button {
    height: 38px;
    padding: 0 12px 4px;
    white-space: nowrap;
}
.tabs .addin {
    width: 98px;
}
.tabs .active {
    background-color: #f3f3f3;
    color: #2b579a;
}
.tabs .tell-me, .tabs .share {
    display: flex;
    align-items: center;
    gap: 14px;
    padding: 0 0 2px;
    margin-left: 18px;
}
.tabs .share {
    gap: 4px;
    margin-left: auto;
}

/* Ribbon */
.ribbon {
    display: flex;
    height: 117px;
    padding: 5px 0;
    background-color: #f3f3f3;
    border-bottom: 1px solid #c9c9c9;
}
.group {
    display: flex;
    flex-direction: column;
    padding: 8px 9px 0;
    border-right: 1px solid #b4b4b4;
}
.clipboard {
    width: 82px;
    padding: 0;
}
.font {
    width: 410px;
}
.paragraph {
    width: 338px;
}
.styles {
    flex: 1;
    min-width: 0;
    max-width: 678px;
    padding: 2px 13px 0 11px;
}
.editing {
    width: 103px;
    padding: 0 0 0 13px;
}
.youdao {
    width: 85px;
    padding: 6px 0 0;
}
.group-name {
    display: flex;
    align-items: center;
    margin-top: auto;
    line-height: 16px;
}
.group-name span {
    flex: 1;
    text-align: center;
    white-space: nowrap;
}
.font .group-name, .paragraph .group-name span {
    padding-right: 20px;
}
.styles .group-name span, .editing .group-name {
    padding-right: 14px;
}
.clipboard .group-name span {
    text-align: left;
}
.launcher {
    margin: 5px -8px 0 0;
}
.clipboard .launcher {
    margin-right: 4px;
}
.side-list {
    display: flex;
    flex-direction: column;
    gap: 3px;
}
.side-list button {
    height: 26px;
    display: flex;
    align-items: center;
    gap: 6px;
    padding-bottom: 2px;
    white-space: nowrap;
}
.side-list .far {
    margin-left: 7px;
}
.disabled {
    color: #adadad;
}
.tool-row {
    display: flex;
    height: 29px;
    margin-bottom: 10px;
}
.tool {
    width: 28px;
    height: 29px;
    display: flex;
    align-items: center;
    justify-content: center;
    font-size: 18px;
    font-weight: bold;
    color: #555;
}
.drop {
    width: 43px;
    justify-content: flex-start;
    gap: 6px;
    padding-left: 2px;
}
.pressed {
    background-color: #c5c5c5;
}
.case {
    width: 24px;
    padding-left: 4px;
    font-size: 16px;
    font-weight: normal;
}
.under {
    width: 24px;
    text-align: center;
    text-decoration: underline;
}
.italic {
    font-family: "Liberation Serif", serif;
    font-size: 20px;
    font-style: italic;
}
.strike {
    font-size: 14px;
    font-weight: normal;
    text-decoration: line-through;
}
.script sub, .script sup {
    font-size: 10px;
    line-height: 10px;
    color: #3f78b8;
}
.glyph {
    font-family: "Open Sans", sans-serif;
    font-weight: 600;
    fill: #555;
}
.sep {
    width: 1px;
    margin: 0 4px;
    background-color: #d0d0d0;
}
.combo {
    display: flex;
    border: 1px solid #c6c6c6;
    background-color: white;
}
.combo input {
    flex: 1;
    min-width: 0;
    padding-left: 2px;
}
.combo button {
    width: 26px;
    padding-left: 5px;
}
.combo-font {
    width: 123px;
}
.combo-size {
    width: 68px;
}

/* Font colour menu */
.color-picker {
    position: relative;
}
.color-menu {
    position: absolute;
    z-index: 5;
    top: 30px;
    left: 0;
    width: 204px;
    padding: 0 1px;
    background-color: white;
    border: 1px solid #c6c6c6;
    box-shadow: 2px 2px 4px rgba(0, 0, 0, 0.15);
}
.color-menu h2 {
    height: 29px;
    padding-left: 10px;
    background-color: #ebebeb;
    color: #666;
    font-size: 15px;
    font-weight: 500;
    line-height: 29px;
}
.menu-item {
    width: 100%;
    height: 30px;
    display: flex;
    align-items: center;
    padding-left: 3px;
    color: #666;
    text-align: left;
}
.menu-item:first-child {
    height: 28px;
    padding-left: 2px;
}
.menu-item svg {
    margin-right: 15px;
}
.menu-item.hover {
    background-color: #c5c5c5;
    color: #333;
}
.auto-swatch {
    width: 24px;
    height: 24px;
    margin-right: 12px;
    border: 1px solid #999;
    background-color: black;
    box-shadow: inset 0 0 0 2px #ddd;
}
.gradient-swatch {
    width: 18px;
    height: 18px;
    margin-right: 17px;
    border: 1px solid #777;
    background: linear-gradient(135deg, white, #888);
}
.arrow {
    margin-left: auto;
    margin-right: 13px;
    border: 4px solid transparent;
    border-left-color: #666;
    border-right: none;
}
.swatches {
    display: flex;
    gap: 4px;
    padding: 2px;
}
.swatches.recent {
    padding-bottom: 4px;
}
.swatches button {
    width: 16px;
    height: 16px;
    border: 1px solid #e2e2e2;
}
.shades {
    display: flex;
    gap: 4px;
    padding: 4px 2px;
}
.shades div {
    width: 16px;
    display: flex;
    flex-direction: column;
    border: 1px solid #e2e2e2;
}
.shades button {
    height: 16px;
}
.shades button:first-child, .shades button:last-child {
    height: 15px;
}

/* Style gallery */
.gallery {
    display: flex;
    height: 76px;
    background-color: white;
    border: 1px solid #d0d0d0;
}
.style {
    flex: 1;
    min-width: 0;
    display: flex;
    flex-direction: column;
    height: 71px;
    margin-top: 1px;
    padding: 5px 8px;
    color: #666;
}
.style.selected {
    padding: 0 3px;
    border: 5px solid #c5c5c5;
}
.preview {
    width: 100%;
    height: 40px;
    overflow: hidden;
    color: black;
    font-family: "Noto Sans CJK SC", sans-serif;
    font-size: 17px;
    font-weight: 300;
    line-height: 38px;
    text-align: left;
    white-space: nowrap;
}
.preview.large {
    font-size: 26px;
    line-height: 36px;
}
.preview.huge {
    font-size: 34px;
    font-weight: 500;
    line-height: 34px;
}
.preview.strong {
    font-weight: bold;
}
.preview.slanted {
    color: #444;
    font-style: italic;
}
.style-name {
    width: 100%;
    line-height: 18px;
    text-align: center;
    white-space: nowrap;
}
.style-name small {
    font-size: 10px;
}
.gallery-scroll {
    width: 20px;
    display: flex;
    flex-direction: column;
    border-left: 1px solid #b4b4b4;
}
.gallery-scroll button {
    flex: 1;
    display: flex;
    align-items: center;
    justify-content: center;
    background-color: #f3f3f3;
    border-bottom: 1px solid #b4b4b4;
    overflow: hidden;
}
.big-button {
    display: flex;
    flex-direction: column;
    align-items: center;
    line-height: 20px;
}
.big-button svg {
    margin-bottom: 4px;
}
.collapse {
    align-self: flex-end;
    margin: 0 10px 0 auto;
}

/* Document */
.document {
    position: relative;
    flex: 1;
    min-height: 0;
    display: flex;
    flex-direction: column;
    gap: 27px;
    padding: 0 182px 0 88px;
    overflow: hidden;
    background-color: #e6e6e6;
}
.page {
    background-color: white;
    border: 1px solid #c6c6c6;
}
.page.previous {
    height: 66px;
    border-top: none;
}
.page.current {
    flex: 1;
    padding-top: 134px;
    border-bottom: none;
}
.page-header {
    display: flex;
    margin: 0 179px;
}
.corner {
    width: 45px;
    height: 45px;
    border-bottom: 1px solid #aaa;
}
.corner.left {
    border-right: 1px solid #aaa;
}
.corner.right {
    margin-left: auto;
    border-left: 1px solid #aaa;
}
.page-number {
    padding: 13px 0 0 12px;
    color: #ed1c24;
    font-family: "Noto Sans CJK SC", sans-serif;
    font-size: 18px;
}
.page-text {
    padding-left: 225px;
    color: black;
    font-family: "Noto Sans CJK SC", sans-serif;
    font-size: 26px;
    line-height: 34px;
    white-space: nowrap;
}
.page-text p {
    height: 35px;
    display: flex;
    align-items: center;
}
.cursor {
    width: 1px;
    height: 35px;
    background-color: black;
}

/* Colour dialogs, free windows over the page */
.shot {
    position: absolute;
    overflow: hidden;
    background: linear-gradient(#d6d6d6, #b8b8b8 5px);
}
.shot-before {
    top: 100px;
    left: 604px;
    padding: 4px 0 0 1px;
}
.shot-after {
    top: 109px;
    left: 999px;
    padding: 1px 0 0 3px;
}
.dialog {
    position: relative;
    width: 374px;
    height: 462px;
    display: flex;
    flex-direction: column;
    border-top: 1px solid #6d6d6d;
    border-left: 1px solid #6d6d6d;
    background-color: #f0f0f0;
    color: black;
}
.shot-after .dialog {
    width: 376px;
    border-right: 1px solid #6d6d6d;
}
.dialog-title {
    height: 37px;
    display: flex;
    align-items: center;
    padding: 0 1px 2px 9px;
    background-color: white;
}
.dialog-title span {
    flex: 1;
}
.dialog-title button {
    width: 57px;
    display: flex;
    justify-content: center;
    font-size: 16px;
}
.dialog-body {
    flex: 1;
    display: flex;
    gap: 14px;
    padding: 10px 0 12px 8px;
}
.dialog-main {
    width: 244px;
    display: flex;
    flex-direction: column;
}
.dialog-tabs {
    height: 33px;
    display: flex;
    align-items: flex-end;
    padding-left: 2px;
}
.dialog-tabs button {
    width: 69px;
    height: 31px;
    border-top: 1px solid #d9d9d9;
}
.dialog-tabs .active {
    z-index: 1;
    width: 76px;
    height: 34px;
    margin-bottom: -1px;
    padding-bottom: 1px;
    border: 1px solid #d9d9d9;
    border-bottom: none;
    background-color: white;
}
.focus {
    display: block;
    width: 64px;
    margin: 0 auto;
    border: 1px dotted black;
    line-height: 24px;
}
.panel {
    flex: 1;
    padding: 12px 7px 0 12px;
    background-color: white;
    border: 1px solid #dcdcdc;
}
.panel-label {
    margin-bottom: 5px;
}
.pickers {
    display: flex;
    height: 139px;
    margin-bottom: 7px;
}
.spectrum-box {
    position: relative;
    width: 184px;
    height: 139px;
    overflow: hidden;
}
.spectrum {
    display: block;
    width: 184px;
    height: 139px;
    image-rendering: pixelated;
}
.cross {
    position: absolute;
}
.cross-low {
    left: 112px;
    top: 128px;
}
.cross-high {
    left: 3px;
    top: 6px;
}
.luminance {
    width: 12px;
    height: 134px;
    margin: 3px 3px 0 12px;
}
.grey {
    background: linear-gradient(white, black);
}
.orange {
    background: linear-gradient(white, #f66a0a 50%, black);
}
.pointer {
    align-self: flex-start;
    border: 4px solid transparent;
    border-right: 7px solid black;
    border-left: none;
}
.pointer.low {
    margin-top: 132px;
}
.pointer.middle {
    margin-top: 56px;
}
.field {
    display: flex;
    align-items: center;
    height: 33px;
    margin-bottom: 5px;
}
.field label {
    width: 96px;
    flex: none;
    padding-bottom: 2px;
    white-space: nowrap;
}
.field.number {
    height: 30px;
}
.number label {
    align-self: flex-start;
    line-height: 20px;
}
.field select {
    width: 125px;
    height: 33px;
    padding: 0 0 2px 3px;
    appearance: none;
    border: 1px solid #adadad;
    background:
        linear-gradient(-45deg, transparent 45%, #555 46%, #555 56%, transparent 57%) right 4px center / 6px 6px no-repeat,
        linear-gradient(45deg, transparent 45%, #555 46%, #555 56%, transparent 57%) right 9px center / 6px 6px no-repeat,
        linear-gradient(90deg, #adadad 1px, #e1e1e1 1px) right / 21px 100% no-repeat,
        white;
}
.spinner {
    position: relative;
    width: 69px;
    height: 30px;
    display: flex;
    border: 1px solid #adadad;
    background-color: white;
}
.spinner input {
    flex: 1;
    min-width: 0;
    padding: 0 0 2px 2px;
}
.spinner span {
    width: 20px;
    display: flex;
    flex-direction: column;
    padding: 1px 1px 1px 0;
}
.spinner button {
    flex: 1;
    display: flex;
    align-items: center;
    justify-content: center;
    border: 1px solid #adadad;
    background-color: #f0f0f0;
}
.up::before, .down::before {
    content: "";
    border: 4px solid transparent;
}
.up::before {
    border-top: none;
    border-bottom-color: black;
}
.down::before {
    border-bottom: none;
    border-top-color: black;
}
.input-cursor {
    position: absolute;
    left: 20px;
    top: 3px;
    width: 1px;
    height: 20px;
    background-color: black;
}
.dialog-side {
    width: 99px;
    display: flex;
    flex-direction: column;
    align-items: center;
}
.dialog-side button {
    width: 99px;
    height: 34px;
    margin-bottom: 11px;
    border: 1px solid #adadad;
    background-color: #e1e1e1;
}
.dialog-side .ok {
    border: 2px solid #0078d7;
}
.new-label {
    margin-top: auto;
    margin-bottom: 7px;
}
.compare {
    width: 78px;
    height: 78px;
    border: 1px solid #555;
    background-color: black;
}
.new-color {
    display: block;
    height: 38px;
}
.new-color.picked {
    background-color: #f37d30;
}
.current-label {
    margin: 8px 0 -4px;
}
.grip {
    position: absolute;
    right: 0;
    bottom: 0;
}

/* Red frames drawn over the windows */
.mark {
    position: absolute;
    z-index: 6;
    border: 5px solid #ed1c24;
}
.mark-menu {
    top: 291px;
    left: -16px;
    width: 232px;
    height: 44px;
}
.mark-tab {
    top: 148px;
    left: 678px;
    width: 91px;
    height: 44px;
}
.mark-rgb {
    top: 366px;
    left: 1104px;
    width: 154px;
    height: 169px;
}
.mark-new {
    top: 428px;
    left: 1271px;
    width: 98px;
    height: 66px;
}

/* Status bar */
.statusbar {
    height: 28px;
    display: flex;
    align-items: center;
    padding: 0 11px 1px 0;
    background-color: #f3f3f3;
    border-top: 1px solid #c6c6c6;
    color: #444;
    white-space: nowrap;
}
.pages {
    width: 89px;
}
.words {
    width: 85px;
}
.language {
    margin: 0 25px 0 22px;
}
.views {
    display: flex;
    align-self: stretch;
    margin: 0 0 -1px auto;
}
.views button {
    width: 50px;
    display: flex;
    align-items: center;
    justify-content: center;
}
.views .active {
    background-color: #c6c6c6;
}
.zoom-step {
    width: 22px;
    font-size: 20px;
    line-height: 20px;
}
.zoom {
    width: 125px;
    height: 16px;
    appearance: none;
    background: linear-gradient(#aaa, #aaa) center / 1px 7px no-repeat, linear-gradient(#aaa, #aaa) center / 100% 1px no-repeat;
}
.zoom::-webkit-slider-thumb {
    appearance: none;
    width: 6px;
    height: 14px;
    background-color: #666;
}
.percent {
    width: 50px;
    text-align: right;
}

/* Taskbar */
.taskbar {
    width: 90px;
    display: flex;
    flex-direction: column;
    margin-bottom: 1px;
    overflow: hidden;
    background: linear-gradient(90deg, #2d2d2d, #262626 50%, #111);
    color: white;
}
.system {
    margin-bottom: 4px;
}
.system button, .apps button {
    width: 90px;
    height: 49px;
    display: flex;
    align-items: center;
    justify-content: center;
}
.apps button {
    position: relative;
    height: 59px;
}
.running::after {
    content: "";
    position: absolute;
    right: 0;
    top: 6px;
    width: 3px;
    height: 48px;
    background-color: #76b9ed;
}
.several::after {
    width: 6px;
    background: linear-gradient(90deg, #5c90bb 4px, #39597a 4px, #39597a 5px, #76b9ed 5px);
}
.apps .current {
    padding-right: 5px;
    background: linear-gradient(90deg, #575757, #484848);
    border-left: 5px solid #3a3a3a;
}
.current::after {
    top: 0;
    height: 59px;
}
.tray {
    display: grid;
    grid-template-columns: repeat(3, 20px);
    gap: 10px;
    margin-top: auto;
    padding-left: 11px;
}
.ime {
    display: flex;
    align-items: center;
    gap: 18px;
    margin: 14px 0 26px;
    padding-left: 14px;
}
.ime span {
    font-size: 16px;
    font-weight: 300;
}
.clock {
    display: flex;
    flex-direction: column;
    align-items: center;
}
.notices {
    height: 32px;
    margin: 24px 0 0 34px;
}
.taskbar::after {
    content: "";
    height: 1px;
    margin: 8px 0 5px;
    flex: none;
    background-color: #777;
}
```
FILE: script.js
```
const themeColors = ["#ffffff", "#000000", "#e7e6e6", "#44546a", "#4472c4", "#ed7d31", "#a5a5a5", "#ffc000", "#5b9bd5", "#70ad47"];
const themeShades = [
    ["#f2f2f2", "#d8d8d8", "#bfbfbf", "#a5a5a5", "#7f7f7f"],
    ["#7f7f7f", "#595959", "#3f3f3f", "#262626", "#0c0c0c"],
    ["#d0cece", "#aeabab", "#757070", "#3a3838", "#171616"],
    ["#d6dce4", "#adb9ca", "#8496b0", "#323f4f", "#222a35"],
    ["#d9e2f3", "#b4c6e7", "#8eaadb", "#2f5496", "#1f3864"],
    ["#fbe5d5", "#f7cbac", "#f4b183", "#c55a11", "#833c0b"],
    ["#ededed", "#dbdbdb", "#c9c9c9", "#7b7b7b", "#525252"],
    ["#fff2cc", "#fee599", "#ffd965", "#bf9000", "#7f6000"],
    ["#deebf6", "#bdd7ee", "#9cc3e5", "#2e75b5", "#1e4e79"],
    ["#e2efd9", "#c5e0b3", "#a8d08d", "#538135", "#375623"]
];
const standardColors = ["#c00000", "#ff0000", "#ffc000", "#ffff00", "#92d050", "#00b050", "#00b0f0", "#0070c0", "#002060", "#7030a0"];
const recentColors = ["#f57f98", "#f49c96"];

function addSwatches(parent, colors) {
    colors.forEach(color => {
        const swatch = document.createElement("button");
        swatch.style.backgroundColor = color;
        swatch.setAttribute("aria-label", color);
        parent.appendChild(swatch);
    });
}

addSwatches(document.getElementById("theme-colors"), themeColors);
addSwatches(document.getElementById("standard-colors"), standardColors);
addSwatches(document.getElementById("recent-colors"), recentColors);

// One column of five shades per theme colour
themeShades.forEach(shades => {
    const column = document.createElement("div");
    addSwatches(column, shades);
    document.getElementById("theme-shades").appendChild(column);
});

// Hue from left to right, saturation from top to bottom
document.querySelectorAll(".spectrum").forEach(canvas => {
    const ctx = canvas.getContext("2d");
    for (let x = 0; x < canvas.width; x++) {
        for (let y = 0; y < canvas.height; y++) {
            ctx.fillStyle = `hsl(${x / canvas.width * 360}, ${100 - y / canvas.height * 100}%, 50%)`;
            ctx.fillRect(x, y, 1, 1);
        }
    }
});
```
